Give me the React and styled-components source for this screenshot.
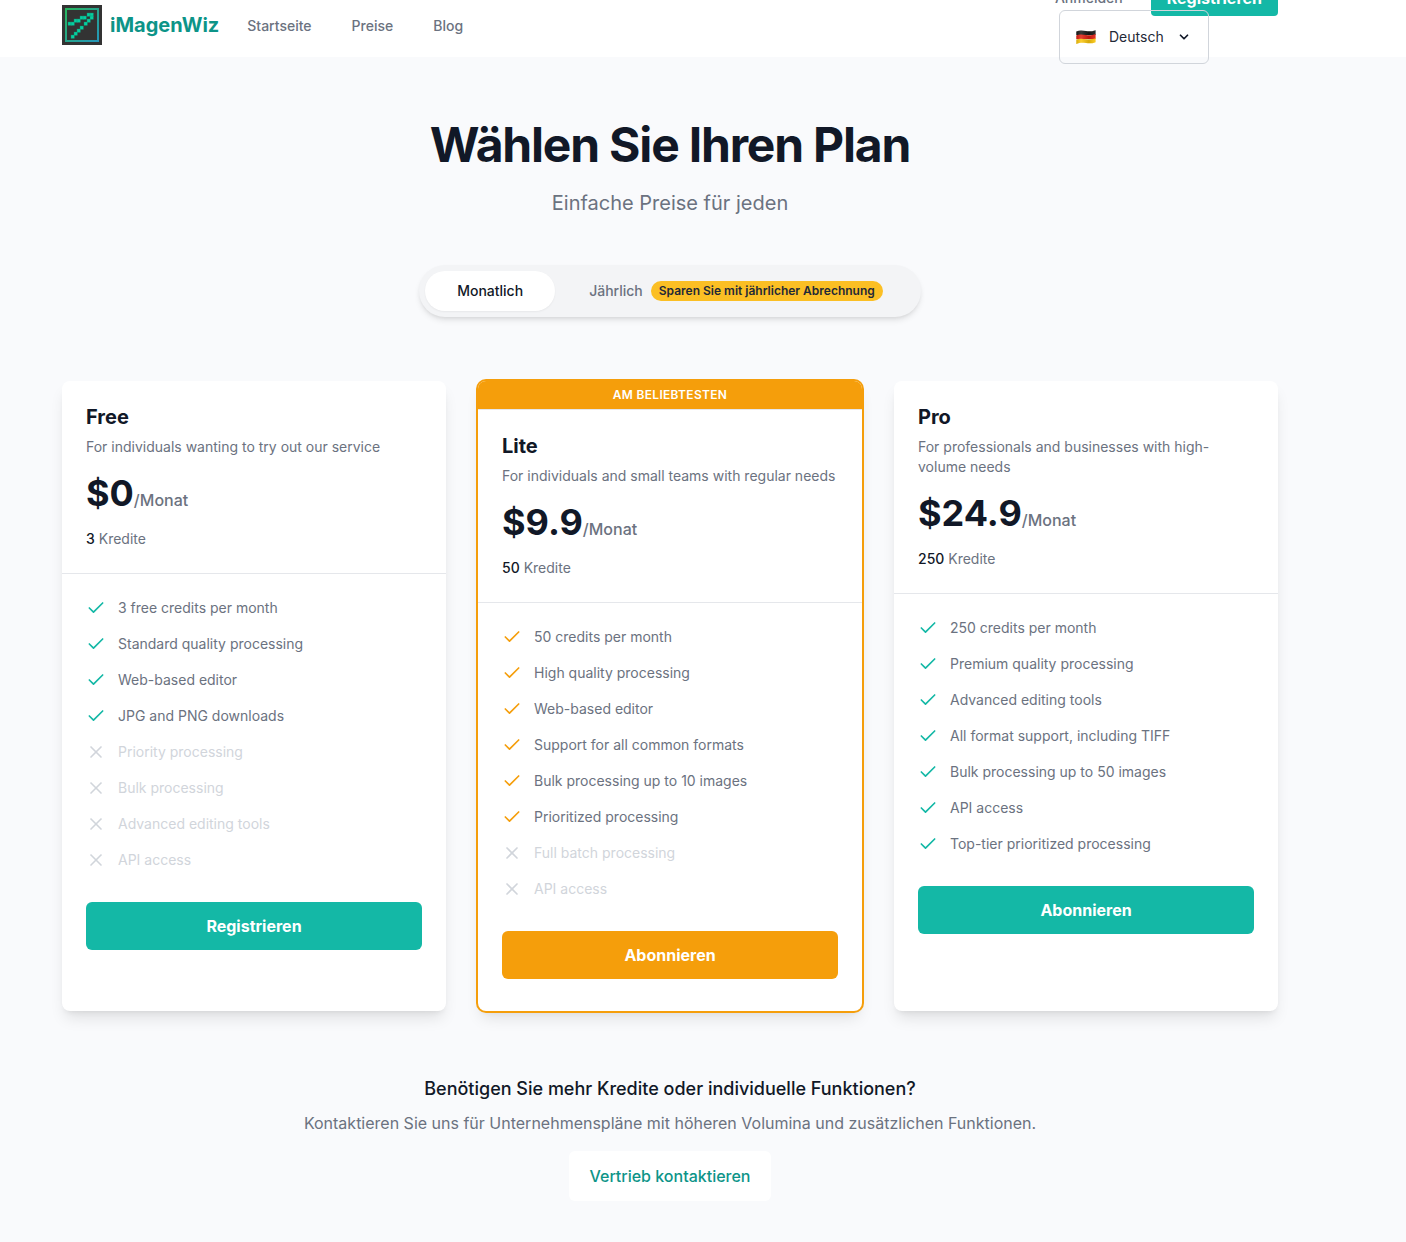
import React, { useState } from "react";
import styled, { createGlobalStyle } from "styled-components";
import { Check, ChevronDown, X } from "lucide-react";

const GlobalStyle = createGlobalStyle`
  *, *::before, *::after { box-sizing: border-box; }
  body {
    margin: 0;
    background: #f9fafc;
    color: #111827;
    font-family: Inter, "Liberation Sans", sans-serif;
    font-size: 16px;
    line-height: 24px;
    -webkit-font-smoothing: antialiased;
  }
  h1, h2, h3, p, ul { margin: 0; padding: 0; }
  button, select { font-family: inherit; }
`;

const Header = styled.header`
  height: 57px;
  padding-right: 66px;
  background: #ffffff;
`;

const HeaderInner = styled.div`
  position: relative;
  display: flex;
  align-items: center;
  max-width: 1280px;
  height: 50px;
  margin: 0 auto;
  padding: 0 32px;
`;

const Brand = styled.a`
  display: flex;
  align-items: center;
  gap: 8px;
  color: #0d9488;
  font-size: 20px;
  font-weight: 700;
  line-height: 28px;
  text-decoration: none;
`;

const Nav = styled.nav`
  display: flex;
  gap: 40px;
  margin-left: 28px;
  padding-top: 2px;
`;

const NavLink = styled.a`
  color: #6b7280;
  font-size: 14px;
  font-weight: 500;
  line-height: 20px;
  text-decoration: none;
`;

const Account = styled.div`
  position: absolute;
  top: -20px;
  right: 32px;
  display: flex;
  align-items: center;
  gap: 28px;
`;

const SignUp = styled.button`
  height: 36px;
  padding: 0 16px;
  border: 0;
  border-radius: 4px;
  background: #14b8a6;
  color: #ffffff;
  font-size: 16px;
  font-weight: 700;
  line-height: 24px;
`;

const LanguagePicker = styled.label`
  position: absolute;
  top: 10px;
  right: 101px;
  display: flex;
  align-items: center;
  width: 150px;
  height: 54px;
  padding: 0 16px;
  border: 1px solid #d1d5db;
  border-radius: 6px;
`;

const LanguageSelect = styled.select`
  flex: 1;
  min-width: 0;
  margin-left: 13px;
  padding: 0;
  border: 0;
  appearance: none;
  background: transparent;
  color: #1f2937;
  font-size: 14px;
  line-height: 20px;
`;

const Chevron = styled(ChevronDown)`
  flex: none;
  margin-right: 1px;
  color: #111827;
`;

const Main = styled.main`
  padding-right: 66px;
`;

const Content = styled.div`
  display: flex;
  flex-direction: column;
  align-items: center;
  max-width: 1280px;
  margin: 0 auto;
  padding: 64px 32px 40px;
`;

const Title = styled.h1`
  font-size: 48px;
  font-weight: 700;
  line-height: 48px;
  letter-spacing: -0.025em;
  text-align: center;
`;

const Subtitle = styled.p`
  margin-top: 20px !important;
  color: #6b7280;
  font-size: 20px;
  line-height: 28px;
  text-align: center;
`;

const BillingToggle = styled.div`
  display: flex;
  gap: 2px;
  margin-top: 48px;
  padding: 6px;
  border-radius: 26px;
  background: #f3f4f6;
  box-shadow: 0 4px 6px -1px rgba(0, 0, 0, 0.1), 0 2px 4px -2px rgba(0, 0, 0, 0.1);
`;

const BillingOption = styled.button`
  display: flex;
  align-items: center;
  gap: 8px;
  height: 40px;
  padding: 0 32px;
  border: 0;
  border-radius: 20px;
  background: ${(p) => (p.$active ? "#ffffff" : "transparent")};
  box-shadow: ${(p) => (p.$active ? "0 1px 2px rgba(0, 0, 0, 0.05)" : "none")};
  color: ${(p) => (p.$active ? "#111827" : "#6b7280")};
  font-size: 14px;
  font-weight: 500;
  line-height: 20px;
`;

const SavingsBadge = styled.span`
  padding: 2px 8px;
  border-radius: 10px;
  background: #fbbf24;
  color: #1f2937;
  font-size: 12px;
  font-weight: 600;
  line-height: 16px;
`;

const Plans = styled.div`
  display: grid;
  grid-template-columns: repeat(3, minmax(0, 1fr));
  gap: 32px;
  width: 100%;
  margin-top: 64px;
`;

const Card = styled.section`
  overflow: hidden;
  border-radius: 8px;
  background: #ffffff;
  box-shadow: ${(p) => (p.$popular ? "0 0 0 2px #f59e0b, " : "")}0 10px 15px -3px rgba(0, 0, 0, 0.1),
    0 4px 6px -4px rgba(0, 0, 0, 0.1);
`;

const PopularBanner = styled.p`
  padding: 6px 0 !important;
  background: #f59e0b;
  color: #ffffff;
  font-size: 12px;
  font-weight: 600;
  line-height: 16px;
  letter-spacing: 0.025em;
  text-align: center;
  text-transform: uppercase;
`;

const PlanSummary = styled.div`
  padding: 24px;
  border-top: ${(p) => (p.$divided ? "1px solid #e5e7eb" : "0")};
`;

const PlanName = styled.h2`
  font-size: 20px;
  font-weight: 700;
  line-height: 24px;
`;

const PlanText = styled.p`
  margin-top: ${(p) => p.$gap}px !important;
  color: #6b7280;
  font-size: 14px;
  line-height: 20px;

  strong {
    color: #111827;
    font-weight: 500;
  }
`;

const Price = styled.p`
  display: flex;
  align-items: baseline;
  margin-top: 16px !important;
  color: #6b7280;
  font-size: 16px;
  font-weight: 500;
  line-height: 24px;

  strong {
    color: #111827;
    font-size: 36px;
    font-weight: 700;
    line-height: 40px;
  }
`;

const PlanDetails = styled.div`
  padding: 24px 24px 32px;
  border-top: 1px solid #e5e7eb;
`;

const Features = styled.ul`
  display: grid;
  gap: 16px;
  list-style: none;
`;

const Feature = styled.li`
  display: flex;
  gap: 12px;
  color: ${(p) => (p.$included ? "#6b7280" : "#d1d5db")};
  font-size: 14px;
  line-height: 20px;

  svg {
    flex: none;
    color: ${(p) => (p.$included ? p.$accent : "#d1d5db")};
  }
`;

const PlanButton = styled.button`
  width: 100%;
  height: 48px;
  margin-top: 32px;
  border: 0;
  border-radius: 6px;
  background: ${(p) => p.$accent};
  color: #ffffff;
  font-size: 16px;
  font-weight: 700;
  line-height: 24px;
`;

const ContactTitle = styled.h3`
  margin-top: 64px !important;
  font-size: 18px;
  font-weight: 500;
  line-height: 28px;
  text-align: center;
`;

const ContactText = styled.p`
  margin-top: 8px !important;
  color: #6b7280;
  text-align: center;
`;

const ContactLink = styled.a`
  margin-top: 16px;
  padding: 13px 21px;
  border-radius: 6px;
  background: #ffffff;
  color: #0d9488;
  font-weight: 500;
  text-decoration: none;
`;

const TEAL = "#14b8a6";
const AMBER = "#f59e0b";

const plans = [
  {
    name: "Free",
    description: "For individuals wanting to try out our service",
    price: "$0",
    credits: 3,
    accent: TEAL,
    action: "Registrieren",
    included: ["3 free credits per month", "Standard quality processing", "Web-based editor", "JPG and PNG downloads"],
    excluded: ["Priority processing", "Bulk processing", "Advanced editing tools", "API access"],
  },
  {
    name: "Lite",
    description: "For individuals and small teams with regular needs",
    price: "$9.9",
    credits: 50,
    accent: AMBER,
    action: "Abonnieren",
    popular: true,
    included: [
      "50 credits per month",
      "High quality processing",
      "Web-based editor",
      "Support for all common formats",
      "Bulk processing up to 10 images",
      "Prioritized processing",
    ],
    excluded: ["Full batch processing", "API access"],
  },
  {
    name: "Pro",
    description: "For professionals and businesses with high-volume needs",
    price: "$24.9",
    credits: 250,
    accent: TEAL,
    action: "Abonnieren",
    included: [
      "250 credits per month",
      "Premium quality processing",
      "Advanced editing tools",
      "All format support, including TIFF",
      "Bulk processing up to 50 images",
      "API access",
      "Top-tier prioritized processing",
    ],
    excluded: [],
  },
];

const wandPixels = [
  [6, 17], [9, 17], [12, 14], [15, 14], [18, 11], [21, 11], [25, 8], [28, 8],
  [28, 11], [25, 14], [22, 17], [18, 21], [15, 24], [12, 27], [9, 30],
];

function Logo() {
  return (
    <svg width="40" height="40" viewBox="0 0 40 40" aria-hidden="true">
      <defs>
        <linearGradient id="logo-frame" x1="0" y1="0" x2="1" y2="1">
          <stop offset="0" stopColor="#27b55f" />
          <stop offset="1" stopColor="#2496b8" />
        </linearGradient>
      </defs>
      <rect width="40" height="40" fill="#333333" />
      <rect x="4" y="4" width="32" height="32" fill="none" stroke="url(#logo-frame)" strokeWidth="2" />
      {wandPixels.map(([x, y]) => (
        <rect key={`${x}-${y}`} x={x} y={y} width="3.4" height="3.4" fill="#05cfa0" stroke="#16856a" strokeWidth="0.4" />
      ))}
    </svg>
  );
}

function GermanFlag() {
  return (
    <svg width="20" height="16" viewBox="0 0 20 16" aria-hidden="true">
      <defs>
        <clipPath id="flag-wave">
          <path d="M.3 2.5C4 .8 7 1.6 10 2.1s6 .3 9.6-.9v12c-3.3 1.4-6.6 1.3-9.6.9s-6-.8-9.7.9z" />
        </clipPath>
        <linearGradient id="flag-shade">
          <stop offset="0" stopColor="#000" stopOpacity=".15" />
          <stop offset=".25" stopColor="#fff" stopOpacity=".15" />
          <stop offset=".65" stopColor="#000" stopOpacity=".15" />
          <stop offset="1" stopColor="#fff" stopOpacity=".1" />
        </linearGradient>
      </defs>
      <g clipPath="url(#flag-wave)">
        <path fill="#171717" d="M0 0h20v6H0z" />
        <path fill="#e11d0f" d="M0 6.6C4 5 7 5.7 10 6s6 .4 10-1v5H0z" />
        <path fill="#fbc60a" d="M0 10.8c4-1.7 7-1 10-.6s6 .4 10-1.2v7H0z" />
        <path fill="url(#flag-shade)" d="M0 0h20v16H0z" />
      </g>
    </svg>
  );
}

function PlanCard({ plan }) {
  return (
    <Card $popular={plan.popular}>
      {plan.popular && <PopularBanner>Am beliebtesten</PopularBanner>}
      <PlanSummary $divided={plan.popular}>
        <PlanName>{plan.name}</PlanName>
        <PlanText $gap={8}>{plan.description}</PlanText>
        <Price>
          <strong>{plan.price}</strong>/Monat
        </Price>
        <PlanText $gap={16}>
          <strong>{plan.credits}</strong> Kredite
        </PlanText>
      </PlanSummary>
      <PlanDetails>
        <Features>
          {plan.included.map((text) => (
            <Feature key={text} $included $accent={plan.accent}>
              <Check size={20} />
              {text}
            </Feature>
          ))}
          {plan.excluded.map((text) => (
            <Feature key={text}>
              <X size={20} />
              {text}
            </Feature>
          ))}
        </Features>
        <PlanButton type="button" $accent={plan.accent}>{plan.action}</PlanButton>
      </PlanDetails>
    </Card>
  );
}

export default function App() {
  const [yearly, setYearly] = useState(false);

  return (
    <>
      <GlobalStyle />
      <Header>
        <HeaderInner>
          <Brand href="#">
            <Logo />
            iMagenWiz
          </Brand>
          <Nav>
            <NavLink href="#">Startseite</NavLink>
            <NavLink href="#">Preise</NavLink>
            <NavLink href="#">Blog</NavLink>
          </Nav>
          <Account>
            <NavLink href="#">Anmelden</NavLink>
            <SignUp type="button">Registrieren</SignUp>
          </Account>
          <LanguagePicker>
            <GermanFlag />
            <LanguageSelect aria-label="Sprache" defaultValue="de">
              <option value="de">Deutsch</option>
            </LanguageSelect>
            <Chevron size={14} strokeWidth={3} />
          </LanguagePicker>
        </HeaderInner>
      </Header>
      <Main>
        <Content>
          <Title>Wählen Sie Ihren Plan</Title>
          <Subtitle>Einfache Preise für jeden</Subtitle>
          <BillingToggle>
            <BillingOption type="button" $active={!yearly} onClick={() => setYearly(false)}>
              Monatlich
            </BillingOption>
            <BillingOption type="button" $active={yearly} onClick={() => setYearly(true)}>
              Jährlich
              <SavingsBadge>Sparen Sie mit jährlicher Abrechnung</SavingsBadge>
            </BillingOption>
          </BillingToggle>
          <Plans>
            {plans.map((plan) => (
              <PlanCard key={plan.name} plan={plan} />
            ))}
          </Plans>
          <ContactTitle>Benötigen Sie mehr Kredite oder individuelle Funktionen?</ContactTitle>
          <ContactText>
            Kontaktieren Sie uns für Unternehmenspläne mit höheren Volumina und zusätzlichen Funktionen.
          </ContactText>
          <ContactLink href="#">Vertrieb kontaktieren</ContactLink>
        </Content>
      </Main>
    </>
  );
}
